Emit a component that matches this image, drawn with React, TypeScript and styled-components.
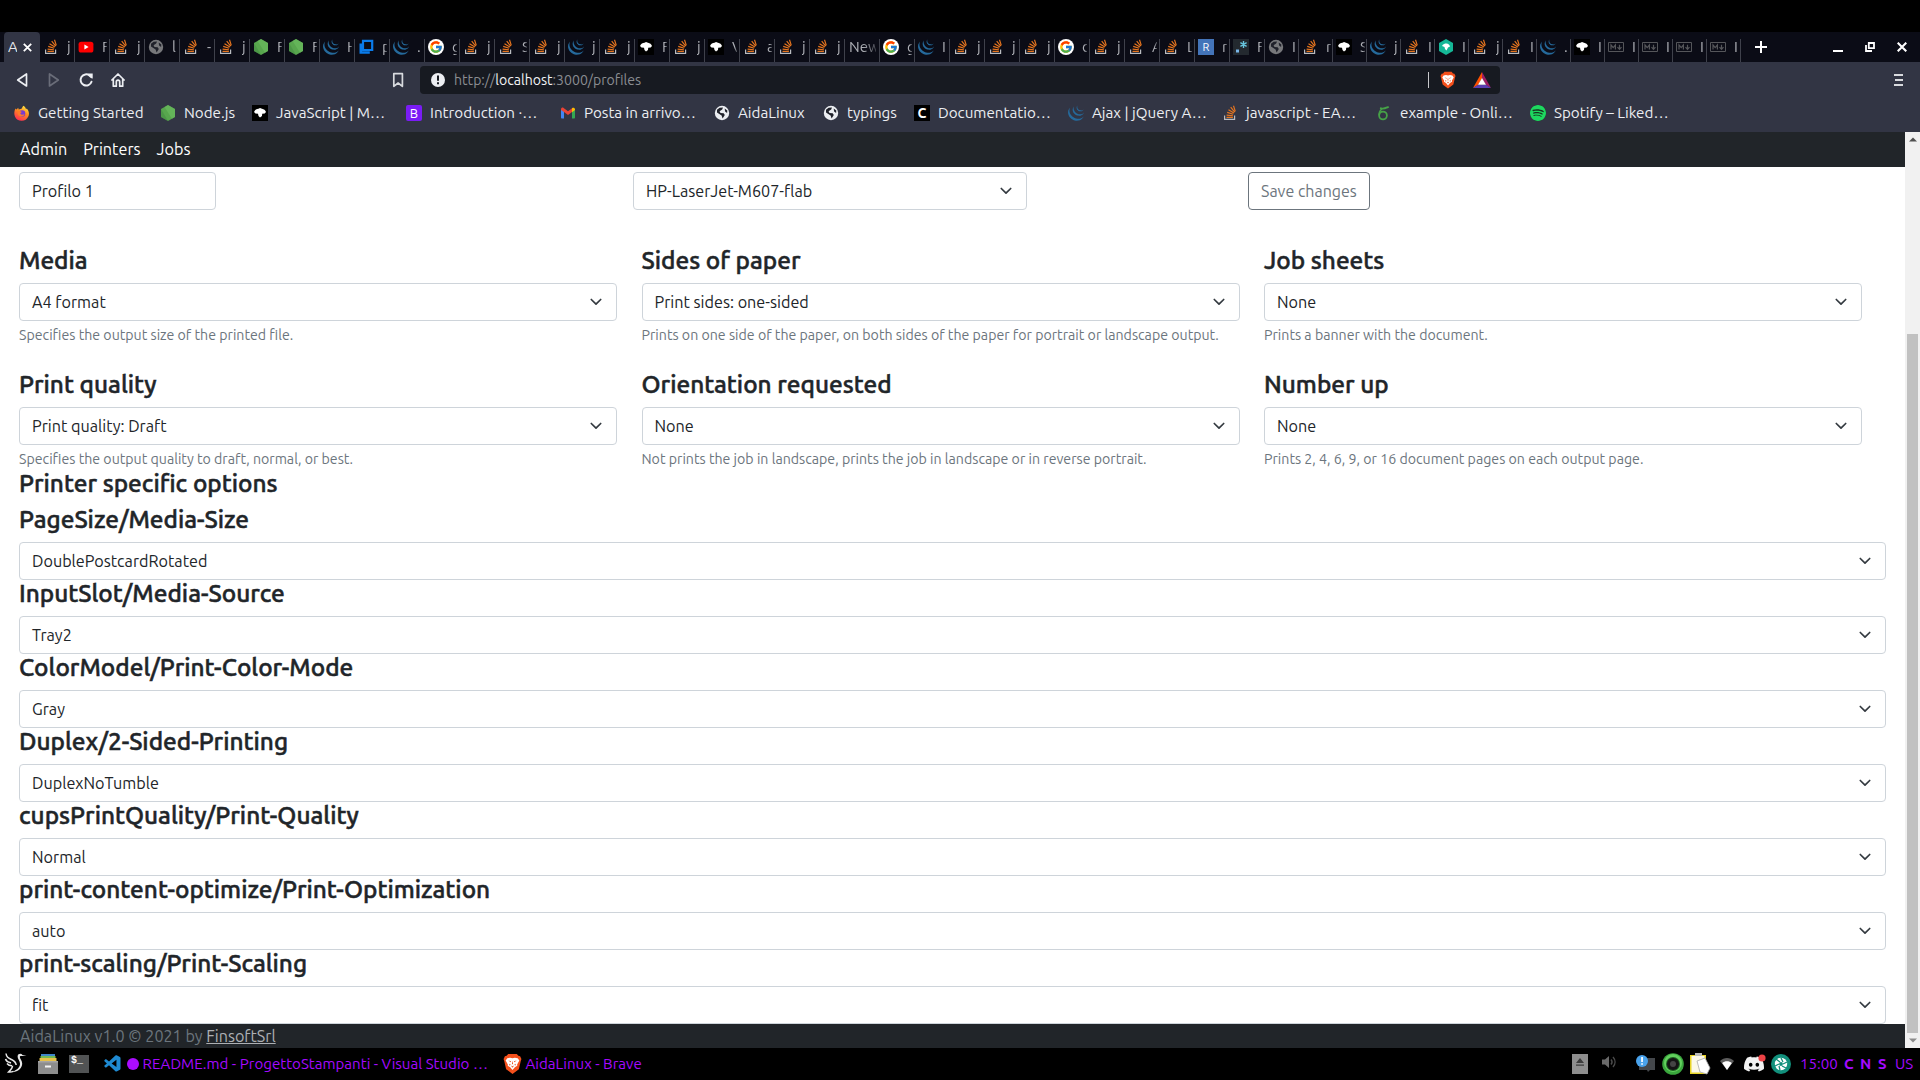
import React from 'react';
import styled, { createGlobalStyle, css } from 'styled-components';
import { FcGoogle } from 'react-icons/fc';
import { SiDiscord, SiJquery, SiSpotify } from 'react-icons/si';
import { VscVscode } from 'react-icons/vsc';

const Global = createGlobalStyle`
  * { box-sizing: border-box; }
  html, body { margin: 0; padding: 0; overflow: hidden; background: #000; }
  body { font-family: 'Ubuntu', 'Noto Sans', 'Open Sans', sans-serif; }
  svg { display: block; flex: none; }
`;

/* ---------- icons ---------- */

const StackIcon = () => (
  <svg width="16" height="16" viewBox="0 0 16 16" fill="none">
    <path d="M2.600 10.400v4h10v-4" stroke="#b9bbbf" strokeWidth="1.200" />
    <path d="M4.500 12.400h6.400M4.600 10.100l6.300.7M5.200 7.400l6 1.900M6.500 4.700l5.400 3.400M8.700 2.200l4 4.900M11.500.8l1.800 5.600" stroke="#e8761f" strokeWidth="1.150" />
  </svg>
);
const YoutubeIcon = () => (
  <svg width="16" height="16" viewBox="0 0 16 16">
    <rect x=".6" y="2.700" width="14.800" height="10.800" rx="2.600" fill="#f00" />
    <path d="M6.400 5.600v4.800l4.200-2.400z" fill="#fff" />
  </svg>
);
const NodeIcon = () => (
  <svg width="16" height="16" viewBox="0 0 16 16">
    <path d="M8 0l7 4v8l-7 4-7-4V4z" fill="#58a64e" />
    <path d="M8 0l7 4v8l-3 1.700L4.500 2z" fill="#6fbf62" opacity=".55" />
    <path d="M1 4l7 12-7-4z" fill="#3f873f" opacity=".5" />
  </svg>
);
const JqueryIcon = () => <SiJquery size={16} color="#256a9c" />;
const SquaresIcon = () => (
  <svg width="16" height="16" viewBox="0 0 16 16" fill="none" stroke="#0a7bea">
    <path d="M5 1.800h9.200V11H5z" strokeWidth="2.200" />
    <path d="M2.800 4.500v9h9" strokeWidth="2.600" />
  </svg>
);
const RoundIcon = styled.span<{ $bg: string }>`
  display: flex;
  align-items: center;
  justify-content: center;
  width: 16px;
  height: 16px;
  border-radius: 50%;
  background: ${(p) => p.$bg};
`;
const GoogleIcon = () => (
  <RoundIcon $bg="#fff">
    <FcGoogle size={14} />
  </RoundIcon>
);
const DinoIcon = () => (
  <svg width="16" height="16" viewBox="0 0 16 16">
    <rect width="16" height="16" fill="#000" />
    <path d="M2 7c1-2.200 2.600-3 4.500-3.200L8 3l2 .7c2 .3 3.300 1.400 4 3.300l-1.300 1.500-2.500.3L10 11l-2 1.600L6.500 11 6 8.700 3.500 8.400z" fill="#fff" />
  </svg>
);
const HexDinoIcon = () => (
  <svg width="16" height="16" viewBox="0 0 16 16">
    <path d="M8 0l7 4v8l-7 4-7-4V4z" fill="#15b797" />
    <path d="M4 7c1-2 3-2.500 4.500-2.500S12 6 12 7.500L10 8.500 8.500 11.500 7 10l-.5-2z" fill="#fff" />
  </svg>
);
const GlobeIcon = ({ color = '#77787b' }: { color?: string }) => (
  <svg width="16" height="16" viewBox="0 0 16 16">
    <circle cx="8" cy="8" r="7.200" fill={color} />
    <path d="M3 4.800l2.600-2L9 2.400 8.200 4.600 5.600 6.200 6.500 8l3.200.2L10.800 10l-2.200 3.600-1-3L3 7.600z" fill="#20222b" />
    <path d="M10.700 3.500l2.600 2-.2 2.500-2-1.500z" fill="#20222b" />
  </svg>
);
const LetterBox = styled.span<{ $bg: string; $size?: number; $round?: number; $weight?: number }>`
  display: flex;
  align-items: center;
  justify-content: center;
  width: 16px;
  height: 16px;
  background: ${(p) => p.$bg};
  border-radius: ${(p) => p.$round ?? 0}px;
  color: #fff;
  font-size: ${(p) => p.$size ?? 11}px;
  line-height: 16px;
  font-weight: ${(p) => p.$weight ?? 400};
`;
const RegexIcon = () => (
  <svg width="16" height="16" viewBox="0 0 16 16">
    <rect width="16" height="16" fill="#23292f" />
    <rect x="3" y="10.500" width="3" height="3" fill="#78b5e8" />
    <path d="M10.500 2v7M7.400 3.700l6.200 3.600M13.600 3.700L7.400 7.300" stroke="#68c5dd" strokeWidth="1.400" />
  </svg>
);
const MarkdownIcon = () => (
  <svg width="16" height="16" viewBox="0 0 16 16" fill="none" stroke="#55565a">
    <path d="M.5 3.500h15v9H.5z" />
    <path d="M3 10.500V6l2.200 2.600L7.400 6v4.500M11.500 5.800v4.200M9.500 8.200l2 2.200 2-2.200" strokeWidth="1.200" />
  </svg>
);
const FirefoxIcon = () => (
  <svg width="16" height="16" viewBox="0 0 17 16">
    <defs>
      <linearGradient id="fox" x1=".8" y1="0" x2=".3" y2="1">
        <stop offset="0" stopColor="#fff044" />
        <stop offset=".45" stopColor="#ff8a1f" />
        <stop offset="1" stopColor="#ff2b55" />
      </linearGradient>
    </defs>
    <path d="M1.500 3.200l1.200 1L4.500 2.300l.4 2L8 3.500 9.800.2C12 1.200 12.500 2.700 12.800 4l.8-.8C16 6 16.500 9 15.200 11.800A7.800 7.800 0 0 1 1 11.600C-.2 8.600.3 5.500 1.500 3.200z" fill="url(#fox)" />
    <circle cx="8.600" cy="8.600" r="3.400" fill="#7a3bd0" />
    <path d="M4 6.200c1.600-.8 3-.4 4.300.7L6.600 8.300c.4 1.600 2.800 2.200 4.600.8-.6 3-4.800 3.600-6.500 1.200-1-1.300-1.100-2.700-.7-4.100z" fill="#ff7a29" />
  </svg>
);
const GmailIcon = () => (
  <svg width="16" height="16" viewBox="0 0 16 16">
    <path d="M1 4l3 2v7.500H1.800A.8.800 0 0 1 1 12.700z" fill="#4285f4" />
    <path d="M12 6l3-2v8.700a.8.800 0 0 1-.8.800H12z" fill="#34a853" />
    <path d="M1 4.200C1 2.700 2.700 2.200 3.600 2.900L8 6.300l4.400-3.400L12 7 8 10 4 7 1 5z" fill="#ea4335" />
    <path d="M12 3.200c1.300-1 3-.2 3 1.200V5l-3 2.200z" fill="#fbbc04" />
  </svg>
);
const OverleafIcon = () => (
  <svg width="16" height="16" viewBox="0 0 16 16" fill="none" stroke="#46a247" strokeWidth="1.800">
    <circle cx="7" cy="10.500" r="3.900" />
    <path d="M3.200 10C3 6 5.500 3.500 8.500 3.200c1.800-.2 3-.6 4.200-1.400M4 3.200c2 .5 5 .3 7-.8" />
  </svg>
);
const BraveIcon = ({ s = 18 }: { s?: number }) => (
  <svg width={s} height={s * 1.15} viewBox="0 0 20 23">
    <path d="M5.500 1h9l1.700 2 1.800.3 1.400 3-.7 2.200-2 8.500L10 22l-6.700-5L1.300 8.500.6 6.300l1.400-3L3.800 3z" fill="#f4501c" />
    <path d="M4.500 5.500L7.500 5l2.500.6 2.500-.6 3 .5 1.700 2.500-2.300 4 .1 1.500-2.500 1.500L10 18l-2.500-3L5 13.500l.1-1.500-2.300-4z" fill="#fff" />
    <path d="M5.600 8l2.900.7-.4 1zM14.400 8l-2.900.7.4 1zM8.300 13.200l1.700.8 1.700-.8-1.700 2.300zM10 8.200l.6 3.200-.6.700-.6-.7zM6.400 11.400l1.700.8-1 1.100zM13.600 11.400l-1.700.8 1 1.100z" fill="#e8501f" />
  </svg>
);
const BatIcon = () => (
  <svg width="18" height="16" viewBox="0 0 18 16">
    <path d="M9 0L0 16l5-3 4-6.500z" fill="#ff5000" />
    <path d="M9 0l9 16-5-3L9 6.500z" fill="#9e1f63" />
    <path d="M0 16h18l-5-3.300H5z" fill="#5a3fb0" />
    <path d="M9 6l4 6.700H5z" fill="#fff" />
  </svg>
);

/* ---------- browser window ---------- */

const Screen = styled.div`
  width: 1920px;
  height: 1080px;
  display: flex;
  flex-direction: column;
  padding-top: 32px;
  background: #000;
  overflow: hidden;
`;
const TabStrip = styled.div`
  display: flex;
  height: 30px;
  padding-left: 4px;
  background: #0b0c16;
`;
const ActiveTab = styled.div`
  display: flex;
  align-items: center;
  width: 36px;
  padding: 0 8px 0 4px;
  justify-content: space-between;
  border-radius: 4px 4px 0 0;
  background: #323544;
  color: #e6e7ea;
`;
const ActiveTitle = styled.span`
  width: 9px;
  overflow: hidden;
  font-size: 15px;
  line-height: 20px;
`;
const Tab = styled.div<{ $w: number }>`
  display: flex;
  align-items: center;
  width: ${(p) => p.$w}px;
  height: 30px;
  padding-left: 3px;
  background: linear-gradient(#3f414b, #3f414b) right 7px / 1px 23px no-repeat;
`;
const TabTitle = styled.span<{ $wide?: boolean }>`
  margin-left: ${(p) => (p.$wide ? 1 : 8)}px;
  width: ${(p) => (p.$wide ? 27 : 5)}px;
  overflow: hidden;
  white-space: nowrap;
  font-size: 15px;
  line-height: 20px;
  color: #aeb0b6;
  mask-image: linear-gradient(to right, #000 50%, rgba(0, 0, 0, 0.35));
`;
const NewTab = styled.div`
  display: flex;
  align-items: center;
  padding-left: 14px;
  flex: 1;
`;
const WindowButtons = styled.div`
  display: flex;
  align-items: center;
  gap: 22px;
  padding-right: 13px;
`;

const Toolbar = styled.div`
  display: flex;
  align-items: center;
  height: 36px;
  padding-left: 15px;
  background: #323544;
`;
const NavButtons = styled.div`
  display: flex;
  gap: 16px;
  width: 375px;
`;
const AddressBar = styled.div`
  display: flex;
  align-items: center;
  width: 1080px;
  height: 28px;
  margin-left: 14px;
  padding: 0 9px 0 10px;
  border-radius: 4px;
  background: #171a21;
`;
const Url = styled.div`
  flex: 1;
  margin-left: 8px;
  font-size: 14.1px;
  line-height: 20px;
  color: #8b8d92;
  b { font-weight: 400; color: #f2f3f5; }
`;
const Divider = styled.i`
  width: 1px;
  height: 16px;
  margin-right: 11px;
  background: #c8c9cc;
`;
const MenuSlot = styled.div`
  margin-left: auto;
  padding-right: 16px;
`;

const Bookmarks = styled.div`
  display: flex;
  align-items: center;
  height: 34px;
  padding: 0 0 4px 14px;
  background: #323544;
`;
const Bookmark = styled.div<{ $w: number }>`
  display: flex;
  align-items: center;
  gap: 8px;
  width: ${(p) => p.$w}px;
  flex: none;
  white-space: nowrap;
  font-size: 15.2px;
  line-height: 20px;
  color: #eceef2;
`;

/* ---------- web page ---------- */

const Viewport = styled.div`
  display: flex;
  height: 916px;
  background: #fff;
`;
const Page = styled.div`
  display: flex;
  flex-direction: column;
  width: 1905px;
  color: #212529;
`;
const Navbar = styled.nav`
  display: flex;
  align-items: center;
  gap: 16px;
  height: 35px;
  padding: 0 0 1px 20px;
  background: #212529;
  color: #fff;
  font-size: 16.2px;
  line-height: 24px;
`;
const Main = styled.main`
  flex: 1;
  padding: 5px 19px 0;
`;
const ProfileRow = styled.div`
  display: grid;
  grid-template-columns: 614px 615px max-content;
`;
const controlBox = css`
  display: flex;
  align-items: center;
  height: 38px;
  padding: 0 12px;
  border: 1px solid #ced4da;
  border-radius: 4px;
  background: #fff;
  line-height: 24px;
`;
const Control = styled.div<{ $w?: number }>`
  ${controlBox}
  width: ${(p) => (p.$w ? `${p.$w}px` : '100%')};
  justify-content: space-between;
  font-size: 16.2px;
`;
const SaveButton = styled.div`
  ${controlBox}
  border-color: #6c757d;
  color: #6c757d;
  font-size: 16px;
`;
const FieldGrid = styled.div`
  display: grid;
  grid-template-columns: repeat(3, 598px);
  column-gap: 24.5px;
  row-gap: 25px;
  margin-top: 37px;
`;
const Heading = styled.h4`
  margin: 0 0 8px;
  height: 28px;
  font-size: 24.4px;
  font-weight: 500;
  line-height: 26px;
  white-space: nowrap;
  -webkit-text-stroke: 0.5px #212529;
`;
const Help = styled.div`
  margin-top: 4px;
  height: 21px;
  font-size: 14.18px;
  line-height: 21px;
  white-space: nowrap;
  color: #6c757d;
`;
const Footer = styled.footer`
  height: 24px;
  padding-left: 20px;
  background: #212529;
  color: #6c757d;
  font-size: 16.15px;
  line-height: 24px;
`;
const FooterLink = styled.a`
  color: #adb0b4;
  text-decoration: underline;
`;
const Scrollbar = styled.div`
  display: flex;
  flex-direction: column;
  align-items: center;
  justify-content: space-between;
  width: 15px;
  padding: 5px 0;
  background: #f1f1f1;
`;
const Thumb = styled.div`
  width: 11px;
  height: 699px;
  margin-top: 187px;
  background: #c1c1c1;
`;

const Chevron = () => (
  <svg width="16" height="16" viewBox="0 0 16 16" fill="none">
    <path d="M3.300 5.500L8 10.200l4.700-4.700" stroke="#343a40" strokeWidth="1.700" strokeLinecap="round" strokeLinejoin="round" />
  </svg>
);

function Select({ value, w }: { value: string; w?: number }) {
  return (
    <Control $w={w}>
      <span>{value}</span>
      <Chevron />
    </Control>
  );
}

const fields = [
  { title: 'Media', value: 'A4 format', help: 'Specifies the output size of the printed file.' },
  { title: 'Sides of paper', value: 'Print sides: one-sided', help: 'Prints on one side of the paper, on both sides of the paper for portrait or landscape output.' },
  { title: 'Job sheets', value: 'None', help: 'Prints a banner with the document.' },
  { title: 'Print quality', value: 'Print quality: Draft', help: 'Specifies the output quality to draft, normal, or best.' },
  { title: 'Orientation requested', value: 'None', help: 'Not prints the job in landscape, prints the job in landscape or in reverse portrait.' },
  { title: 'Number up', value: 'None', help: 'Prints 2, 4, 6, 9, or 16 document pages on each output page.' },
];

const options = [
  { title: 'PageSize/Media-Size', value: 'DoublePostcardRotated' },
  { title: 'InputSlot/Media-Source', value: 'Tray2' },
  { title: 'ColorModel/Print-Color-Mode', value: 'Gray' },
  { title: 'Duplex/2-Sided-Printing', value: 'DuplexNoTumble' },
  { title: 'cupsPrintQuality/Print-Quality', value: 'Normal' },
  { title: 'print-content-optimize/Print-Optimization', value: 'auto' },
  { title: 'print-scaling/Print-Scaling', value: 'fit' },
];

const tabIcons: Record<string, React.ReactNode> = {
  so: <StackIcon />,
  yt: <YoutubeIcon />,
  globe: <GlobeIcon />,
  node: <NodeIcon />,
  jq: <JqueryIcon />,
  sq: <SquaresIcon />,
  g: <GoogleIcon />,
  dino: <DinoIcon />,
  hex: <HexDinoIcon />,
  r: <LetterBox $bg="#4374b9">R</LetterBox>,
  re: <RegexIcon />,
  md: <MarkdownIcon />,
};

const tabs = (
  'so:j yt:F so:j globe:l so:- so:j node:F node:F jq:H sq:p jq:. g:g so:j so:S so:j jq:j so:j dino:F so:j dino:V ' +
  'so:a so:j so:j new:New g:g jq:I so:j so:j so:j g:c so:j so:A so:L r:r re:F globe:I so:r dino:S jq:j so:I ' +
  'hex:I so:j so:I jq:. dino:I md:I md:I md:I md:I'
)
  .split(' ')
  .map((t) => t.split(':'));

const bookmarks: { icon: React.ReactNode; text: string; w: number }[] = [
  { icon: <FirefoxIcon />, text: 'Getting Started', w: 146 },
  { icon: <NodeIcon />, text: 'Node.js', w: 92 },
  { icon: <DinoIcon />, text: 'JavaScript | M…', w: 154 },
  { icon: <LetterBox $bg="#7a1cf5" $size={13} $round={2}>B</LetterBox>, text: 'Introduction ·…', w: 154 },
  { icon: <GmailIcon />, text: 'Posta in arrivo…', w: 154 },
  { icon: <GlobeIcon color="#eceef2" />, text: 'AidaLinux', w: 109 },
  { icon: <GlobeIcon color="#eceef2" />, text: 'typings', w: 91 },
  { icon: <LetterBox $bg="#000" $size={14} $weight={700}>C</LetterBox>, text: 'Documentatio…', w: 154 },
  { icon: <JqueryIcon />, text: 'Ajax | jQuery A…', w: 154 },
  { icon: <StackIcon />, text: 'javascript - EA…', w: 154 },
  { icon: <OverleafIcon />, text: 'example - Onli…', w: 154 },
  { icon: <RoundIcon $bg="#16351f"><SiSpotify size={16} color="#1ed760" /></RoundIcon>, text: 'Spotify – Liked…', w: 154 },
];

/* ---------- desktop panel ---------- */

const Taskbar = styled.div`
  display: flex;
  align-items: center;
  justify-content: space-between;
  height: 32px;
  padding: 0 4px;
  background: #000;
  color: #a40aff;
  font-size: 15.1px;
  line-height: 20px;
`;
const TaskGroup = styled.div`
  display: flex;
  align-items: center;
`;
const Slot = styled.div<{ $w: number }>`
  display: flex;
  align-items: center;
  width: ${(p) => p.$w}px;
  height: 32px;
  flex: none;
  white-space: nowrap;
`;
const Dot = styled.i`
  width: 12px;
  height: 12px;
  border-radius: 50%;
  background: #aa0cff;
`;
const Flag = styled(Slot)`
  font-weight: 700;
`;

const BirdIcon = () => (
  <svg width="24" height="24" viewBox="0 0 24 24">
    <path d="M22.500 3.800L18.500 3c-1.200-1.800-4.600-1.500-4.900 1.300-.2 2.500 2.200 4.200 2.400 7.200.2 3.500-2.500 6-7.500 8.500 5 .3 9.700-3.500 9.700-8.500 0-3-2.400-4.700-2.400-6.500 0-.9.900-1.300 1.900-1z" fill="#e8e8e8" />
    <path d="M2 1.500c.6 4 2.500 4.600 5.500 6 2.500 1.200 4.300 2.600 4.700 5.500M1.500 7c1 3 3 3.300 5.500 4M3 11.500c1.500 2 3 2.300 5 2.300M8.500 13.800c0 2.500-1.500 4-4 6.200 1.800.3 3.500 0 5-.6" fill="none" stroke="#e8e8e8" strokeWidth="1.500" />
  </svg>
);
const CabinetIcon = () => (
  <svg width="20" height="22" viewBox="0 0 20 22">
    <path d="M3 1h14v2H3z" fill="#3f86c8" />
    <path d="M2.500 3h15v2h-15z" fill="#74b852" />
    <path d="M1.500 5h17v3h-17z" fill="#e7c14a" />
    <path d="M0 8h20v13H0z" fill="#8d8d8d" />
    <path d="M0 8h20v1.500H0z" fill="#a5a5a5" />
    <path d="M7 12.500h6v2H7z" fill="#f4f4f4" />
  </svg>
);
const TerminalBox = styled.div`
  width: 20px;
  height: 18px;
  padding-left: 2px;
  background: #515354;
  color: #fff;
  font: 700 10px/12px 'Liberation Mono', monospace;
`;

const Arrow = ({ up }: { up?: boolean }) => (
  <svg width="8" height="5" viewBox="0 0 8 5">
    <path d={up ? 'M0 4.500L4 .5l4 4z' : 'M0 .5h8l-4 4z'} fill={up ? '#505050' : '#8b8b8b'} />
  </svg>
);

export default function App() {
  return (
    <Screen>
      <Global />
      <TabStrip>
        <ActiveTab>
          <ActiveTitle>A</ActiveTitle>
          <svg width="9" height="9" viewBox="0 0 9 9">
            <path d="M.8.8l7.400 7.400M8.200.8L.8 8.200" stroke="#fff" strokeWidth="1.800" />
          </svg>
        </ActiveTab>
        {tabs.map(([kind, title], i) => (
          <Tab key={i} $w={i < 35 ? 35 : 34}>
            {tabIcons[kind]}
            <TabTitle $wide={kind === 'new'}>{title}</TabTitle>
          </Tab>
        ))}
        <NewTab>
          <svg width="12" height="12" viewBox="0 0 12 12">
            <path d="M6 0v12M0 6h12" stroke="#fff" strokeWidth="2" />
          </svg>
        </NewTab>
        <WindowButtons>
          <svg width="10" height="10" viewBox="0 0 10 10">
            <path d="M0 9h10" stroke="#fff" strokeWidth="2" />
          </svg>
          <svg width="10" height="10" viewBox="0 0 10 10" fill="none" stroke="#fff">
            <path d="M3.800 1h5.200v5.200H3.800zM1 3v6h6" strokeWidth="1.800" />
          </svg>
          <svg width="10" height="10" viewBox="0 0 10 10">
            <path d="M.7.7l8.600 8.600M9.300.7L.7 9.300" stroke="#fff" strokeWidth="2.100" />
          </svg>
        </WindowButtons>
      </TabStrip>

      <Toolbar>
        <NavButtons>
          <svg width="16" height="16" viewBox="0 0 16 16" fill="none" stroke="#eceef2" strokeWidth="1.700" strokeLinejoin="round">
            <path d="M11.500 2v12L2.700 8z" />
          </svg>
          <svg width="16" height="16" viewBox="0 0 16 16" fill="none" stroke="#6a6d79" strokeWidth="1.700" strokeLinejoin="round">
            <path d="M2.500 2v12l8.800-6z" />
          </svg>
          <svg width="16" height="16" viewBox="0 0 16 16" fill="none">
            <path d="M12.500 9.700A5.600 5.600 0 1 1 10.700 3.600" stroke="#eceef2" strokeWidth="2" strokeLinecap="round" />
            <path d="M9.500 1.600h4.200v4.800c-2.200.3-4.200-1.700-4.200-4.800z" fill="#eceef2" />
          </svg>
          <svg width="16" height="16" viewBox="0 0 16 16" fill="none" stroke="#eceef2" strokeWidth="1.700" strokeLinecap="round" strokeLinejoin="round">
            <path d="M.9 8L7 2l6.100 6M2.300 7v7.200h3V9.800a1.700 1.700 0 0 1 3.400 0v4.400h3V7" />
          </svg>
        </NavButtons>
        <svg width="16" height="16" viewBox="0 0 16 16" fill="none" stroke="#d8dade" strokeWidth="1.700" strokeLinejoin="round">
          <path d="M3.800 1.700h8.600v12.600L8.100 11l-4.300 3.300z" />
        </svg>
        <AddressBar>
          <svg width="16" height="16" viewBox="0 0 16 16">
            <circle cx="8" cy="8" r="7" fill="#eceef2" />
            <path d="M7 3.500h2v5.300H7zM7 10.300h2v2H7z" fill="#171a21" />
          </svg>
          <Url>
            http://<b>localhost</b>:3000/profiles
          </Url>
          <Divider />
          <BraveIcon s={16} />
          <Slot $w={17} />
          <BatIcon />
        </AddressBar>
        <MenuSlot>
          <svg width="11" height="12" viewBox="0 0 11 12">
            <path d="M1 1h9M2 6h8M1 11h9" stroke="#d8dade" strokeWidth="1.800" />
          </svg>
        </MenuSlot>
      </Toolbar>

      <Bookmarks>
        {bookmarks.map((b) => (
          <Bookmark key={b.text} $w={b.w}>
            {b.icon}
            <span>{b.text}</span>
          </Bookmark>
        ))}
      </Bookmarks>

      <Viewport>
        <Page>
          <Navbar>
            <span>Admin</span>
            <span>Printers</span>
            <span>Jobs</span>
          </Navbar>
          <Main>
            <ProfileRow>
              <Control $w={197}>Profilo 1</Control>
              <Select value="HP-LaserJet-M607-flab" w={394} />
              <SaveButton>Save changes</SaveButton>
            </ProfileRow>
            <FieldGrid>
              {fields.map((f) => (
                <div key={f.title}>
                  <Heading>{f.title}</Heading>
                  <Select value={f.value} />
                  <Help>{f.help}</Help>
                </div>
              ))}
            </FieldGrid>
            <Heading>Printer specific options</Heading>
            {options.map((o) => (
              <div key={o.title}>
                <Heading>{o.title}</Heading>
                <Select value={o.value} />
              </div>
            ))}
          </Main>
          <Footer>
            AidaLinux v1.0 © 2021 by <FooterLink>FinsoftSrl</FooterLink>
          </Footer>
        </Page>
        <Scrollbar>
          <Arrow up />
          <Thumb />
          <Arrow />
        </Scrollbar>
      </Viewport>

      <Taskbar>
        <TaskGroup>
          <Slot $w={34}><BirdIcon /></Slot>
          <Slot $w={31}><CabinetIcon /></Slot>
          <Slot $w={34}><TerminalBox>$_</TerminalBox></Slot>
          <Slot $w={24}><VscVscode size={20} color="#1f8ad2" /></Slot>
          <Slot $w={15.5}><Dot /></Slot>
          <Slot $w={360.5}>README.md - ProgettoStampanti - Visual Studio …</Slot>
          <Slot $w={22.5}><BraveIcon s={19} /></Slot>
          <span>AidaLinux - Brave</span>
        </TaskGroup>
        <TaskGroup>
          <Slot $w={29}>
            <svg width="16" height="20" viewBox="0 0 16 20">
              <path d="M0 0h16v20H0z" fill="#8e8e8e" />
              <path d="M8 4l4 5H4zM4 10.500h8v1.300H4z" fill="#3b3b3b" />
            </svg>
          </Slot>
          <Slot $w={35}>
            <svg width="16" height="20" viewBox="0 0 16 20" fill="none">
              <path d="M1 5.500h3l4-3.500v12l-4-3.500H1z" fill="#6a6a6a" />
              <path d="M10 5.500c1.300 1.500 1.300 3.500 0 5M12 3c2.700 3 2.700 7 0 10" stroke="#4b4b4b" strokeWidth="1.400" />
            </svg>
          </Slot>
          <Slot $w={26}>
            <svg width="20" height="20" viewBox="0 0 20 20">
              <path d="M3 4h16v12h-5l-2 2-1-2H3z" fill="#44474b" />
              <circle cx="6" cy="7" r="6" fill="#4aa3ec" />
              <path d="M5.200 3h1.700v5H5.200zM5.200 9.200h1.700v1.600H5.200z" fill="#fff" />
            </svg>
          </Slot>
          <Slot $w={28}>
            <svg width="22" height="22" viewBox="0 0 22 22">
              <circle cx="11" cy="11" r="10.800" fill="#3aa63d" />
              <circle cx="11" cy="10" r="9" fill="#62cf5d" />
              <circle cx="11" cy="11" r="7" fill="#1b5e20" />
              <circle cx="11" cy="11" r="6" fill="#141414" />
              <circle cx="11" cy="11" r="3" fill="#444" />
            </svg>
          </Slot>
          <Slot $w={30}>
            <svg width="21" height="22" viewBox="0 0 21 22">
              <path d="M0 2h16v19H0z" fill="#e8d427" />
              <path d="M1.500 3h13v16.500h-13z" fill="#fbf8e8" />
              <path d="M5 0h7v3H5z" fill="#b9b9b9" />
              <path d="M7 8l8-3 5 10-3 6-7-2z" fill="#fff" stroke="#aaa" strokeWidth=".8" />
            </svg>
          </Slot>
          <Slot $w={24}>
            <svg width="14" height="14" viewBox="0 0 14 14">
              <path d="M0 4c4-4 10-4 14 0L7 13z" fill="#5c5c5c" />
              <path d="M2.200 6c2.700-2.500 6.900-2.500 9.600 0L7 13z" fill="#fff" />
            </svg>
          </Slot>
          <Slot $w={27}>
            <svg width="22" height="20" viewBox="0 0 22 20">
              <SiDiscord size={20} color="#f2f2f2" />
              <circle cx="18" cy="4" r="3.600" fill="#ed4245" />
            </svg>
          </Slot>
          <Slot $w={29}>
            <svg width="20" height="20" viewBox="0 0 20 20">
              <circle cx="10" cy="10" r="10" fill="#12907c" />
              <circle cx="10" cy="10" r="6.200" fill="#fff" />
              <path d="M10 4l2 4M16 8l-4 2M15 14l-4-2M9 16l-1-4M4 12l4-2M5 5l4 3" stroke="#12907c" strokeWidth="1.300" />
              <circle cx="10" cy="10" r="1.900" fill="#12907c" />
            </svg>
          </Slot>
          <Slot $w={44}>15:00</Slot>
          <Flag $w={16}>C</Flag>
          <Flag $w={18}>N</Flag>
          <Flag $w={17}>S</Flag>
          <Slot $w={21}>US</Slot>
        </TaskGroup>
      </Taskbar>
    </Screen>
  );
}
